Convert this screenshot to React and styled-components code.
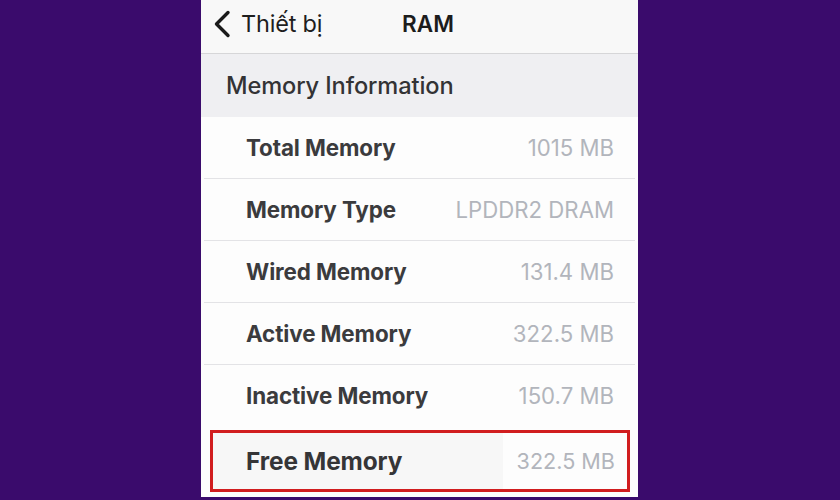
import React from "react";
import styled, { createGlobalStyle } from "styled-components";

const GlobalStyle = createGlobalStyle`
  html, body {
    margin: 0;
    padding: 0;
    background: #3a0b6c;
  }
  body {
    font-family: Inter, "Open Sans", "Liberation Sans", sans-serif;
    -webkit-font-smoothing: antialiased;
  }
`;

const Stage = styled.div`
  width: 840px;
  height: 500px;
  display: flex;
  justify-content: center;
  align-items: flex-start;
  background: #3a0b6c;
  overflow: hidden;
`;

const Phone = styled.div`
  width: 437px;
  height: 497px;
  margin-left: -1px;
  background: #fdfdfd;
  display: flex;
  flex-direction: column;
  overflow: hidden;
`;

const NavBar = styled.div`
  height: 53px;
  flex: none;
  background: #f8f8f8;
  border-bottom: 1px solid #d6d6d8;
  display: grid;
  grid-template-columns: 1fr auto 1fr;
  align-items: center;
  padding: 0 12px;
`;

const BackButton = styled.div`
  display: flex;
  align-items: center;
  gap: 10px;
  color: #1e1e1e;
  font-size: 23.5px;
  font-weight: 400;
  letter-spacing: -0.2px;
  margin-top: -6px;
`;

const NavTitle = styled.div`
  color: #1c1c1c;
  font-size: 22.5px;
  font-weight: 600;
  margin-top: -6px;
  margin-left: 17px;
`;

const SectionHeader = styled.div`
  height: 63px;
  flex: none;
  background: #efeff2;
  display: flex;
  align-items: center;
  padding-left: 25px;
  color: #333335;
  font-size: 23.6px;
  font-weight: 500;
  letter-spacing: -0.1px;
`;

const List = styled.div`
  display: flex;
  flex-direction: column;
  background: #fdfdfd;
  padding: 0 3px;
`;

const Row = styled.div`
  height: 62px;
  flex: none;
  box-sizing: border-box;
  display: flex;
  align-items: center;
  justify-content: space-between;
  padding: 0 21px 0 42px;
  border-bottom: 1px solid ${(p) => (p.$last ? "transparent" : "#e3e3e6")};
  ${(p) =>
    p.$marked &&
    `
    margin: 3px 5px 0 6px;
    padding: 0 12px 0 33px;
    border: 3px solid #d11d1f;
    background: linear-gradient(to right, #f7f7f7 0, #f7f7f7 70%, #fdfdfd 70%);
  `}
`;

const Label = styled.span`
  color: #3b3b3d;
  font-size: 22.4px;
  font-weight: 700;
  letter-spacing: -0.1px;
  ${(p) => p.$marked && `font-size: 24.4px; color: #353537;`}
`;

const Value = styled.span`
  color: #b2b5bc;
  font-size: ${(p) => (p.$marked ? "21.6px" : "22.2px")};
  font-weight: 400;
`;

const Chevron = () => (
  <svg width="18" height="28" viewBox="0 0 18 28" fill="none">
    <path
      d="M15 2.5 L3.5 14 L15 25.5"
      stroke="#1a1a1a"
      strokeWidth="3.4"
      strokeLinecap="round"
      strokeLinejoin="round"
    />
  </svg>
);

const rows = [
  { label: "Total Memory", value: "1015 MB" },
  { label: "Memory Type", value: "LPDDR2 DRAM" },
  { label: "Wired Memory", value: "131.4 MB" },
  { label: "Active Memory", value: "322.5 MB" },
  { label: "Inactive Memory", value: "150.7 MB" },
  { label: "Free Memory", value: "322.5 MB", marked: true },
];

export default function App() {
  return (
    <>
      <GlobalStyle />
      <Stage>
        <Phone>
          <NavBar>
            <BackButton>
              <Chevron />
              <span>Thiết bị</span>
            </BackButton>
            <NavTitle>RAM</NavTitle>
            <span />
          </NavBar>
          <SectionHeader>Memory Information</SectionHeader>
          <List>
            {rows.map((r, i) => (
              <Row
                key={r.label}
                $marked={r.marked}
                $last={i === rows.length - 2}
              >
                <Label $marked={r.marked}>{r.label}</Label>
                <Value $marked={r.marked}>{r.value}</Value>
              </Row>
            ))}
          </List>
        </Phone>
      </Stage>
    </>
  );
}
